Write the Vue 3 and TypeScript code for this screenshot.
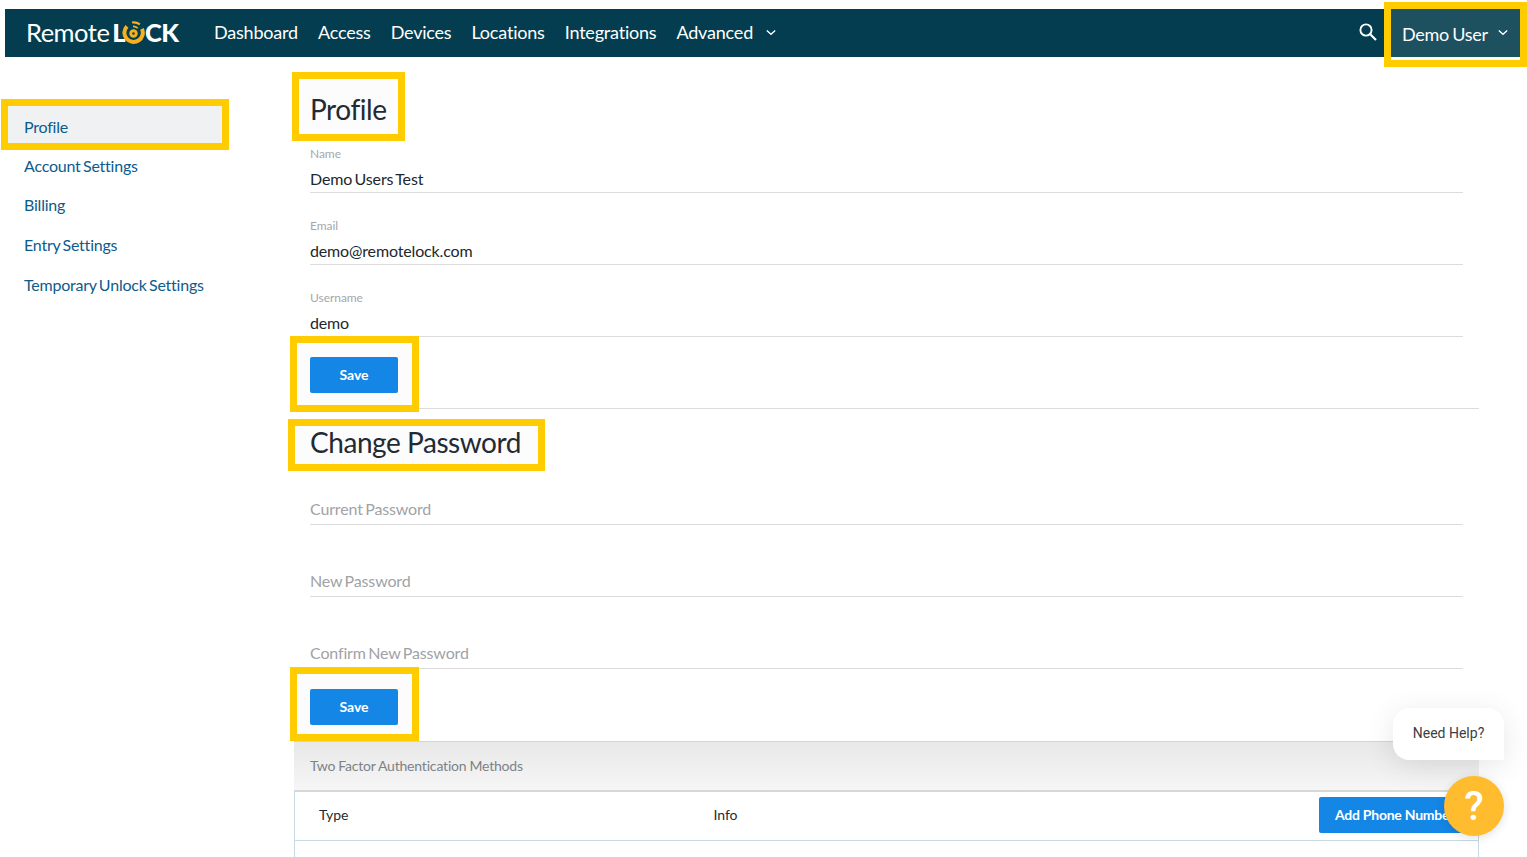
<script setup lang="ts">
const navLinks = ['Dashboard', 'Access', 'Devices', 'Locations', 'Integrations']
const sideLinks = ['Profile', 'Account Settings', 'Billing', 'Entry Settings', 'Temporary Unlock Settings']
const profileFields = [
  { label: 'Name', value: 'Demo Users Test' },
  { label: 'Email', value: 'demo@remotelock.com' },
  { label: 'Username', value: 'demo' }
]
const passwordFields = ['Current Password', 'New Password', 'Confirm New Password']
</script>

<template>
  <div class="page">
    <header class="topbar">
      <div class="logo">
        <span class="logo-light">Remote</span><span class="logo-bold">L</span>
        <svg class="logo-o" viewBox="0 0 24 24" width="23" height="23" aria-hidden="true">
          <path d="M5.2 5.6 A9.6 9.6 0 1 0 20.8 8.2" fill="none" stroke="#f5b01e" stroke-width="4.2" />
          <path d="M10.5 1.6 A10.5 10.5 0 0 1 18.6 3.6" fill="none" stroke="#f5b01e" stroke-width="2.2" />
          <path d="M11.5 5.6 A7 7 0 0 1 16.4 7.4" fill="none" stroke="#f5b01e" stroke-width="1.6" />
          <circle cx="12" cy="13" r="4.4" fill="#f5b01e" />
          <circle cx="12" cy="13" r="1.3" fill="#033d4f" />
        </svg>
        <span class="logo-bold">CK</span>
      </div>
      <nav class="nav">
        <a v-for="link in navLinks" :key="link">{{ link }}</a>
        <a class="has-caret">
          Advanced
          <svg viewBox="0 0 12 8" width="10" height="7" aria-hidden="true"><path d="M1 1.5 6 6.2 11 1.5" fill="none" stroke="#fff" stroke-width="1.6" /></svg>
        </a>
      </nav>
      <svg class="search" viewBox="0 0 20 20" width="20" height="20" aria-hidden="true">
        <circle cx="8" cy="8" r="5.6" fill="none" stroke="#fff" stroke-width="1.9" />
        <path d="M12.2 12.2 18 18" stroke="#fff" stroke-width="2.2" />
      </svg>
      <div class="user marked">
        Demo User
        <svg viewBox="0 0 12 8" width="10" height="7" aria-hidden="true"><path d="M1 1.5 6 6.2 11 1.5" fill="none" stroke="#fff" stroke-width="1.6" /></svg>
      </div>
    </header>

    <div class="body">
      <aside class="side">
        <a v-for="(link, i) in sideLinks" :key="link" class="side-link" :class="{ 'active marked': i === 0 }">{{ link }}</a>
      </aside>

      <main class="main">
        <section class="section">
          <h1 class="title profile-title marked">Profile</h1>
          <div class="fields">
            <div v-for="f in profileFields" :key="f.label" class="field">
              <label>{{ f.label }}</label>
              <div class="value">{{ f.value }}</div>
            </div>
          </div>
          <div class="save-wrap first marked">
            <button type="button" class="btn">Save</button>
          </div>
        </section>

        <section class="section password">
          <h1 class="title password-title marked">Change Password</h1>
          <div class="fields">
            <div v-for="f in passwordFields" :key="f" class="field">
              <label></label>
              <div class="value placeholder">{{ f }}</div>
            </div>
          </div>
          <div class="save-wrap second marked">
            <button type="button" class="btn">Save</button>
          </div>
        </section>

        <div class="panel-head">Two Factor Authentication Methods</div>
        <div class="table">
          <div class="table-row">
            <span class="col-type">Type</span>
            <span class="col-info">Info</span>
            <button type="button" class="btn add">Add Phone Number</button>
          </div>
        </div>
      </main>
    </div>

    <div class="help">
      <div class="help-bubble">Need Help?</div>
      <div class="help-button">?</div>
    </div>
  </div>
</template>

<style scoped>
.page {
  position: relative;
  height: 857px;
  overflow: hidden;
  padding-top: 9px;
  box-sizing: border-box;
  font-family: Lato, "Liberation Sans", sans-serif;
  color: #222b33;
  background: #fff;
}
.marked {
  outline: 7px solid #ffcc00;
  background-color: #fcfcfc;
}
.topbar {
  display: flex;
  align-items: center;
  height: 48px;
  margin: 0 7px 0 5px;
  background: #033d4f;
  color: #fff;
}
.logo {
  display: flex;
  align-items: center;
  margin-left: 22px;
  width: 187px;
  font-size: 25.5px;
  line-height: 1;
}
.logo-light {
  font-weight: 400;
  letter-spacing: -0.5px;
  margin: 0 3px 0 -1px;
}
.logo-bold {
  font-weight: 900;
  letter-spacing: -0.6px;
}
.logo-o {
  margin: -1px 0 0 -3px;
}
.nav {
  display: flex;
  gap: 20px;
  margin-top: -2px;
  font-size: 18px;
  letter-spacing: -0.2px;
}
.nav a {
  white-space: nowrap;
}
.has-caret svg {
  margin-left: 9px;
  vertical-align: 3px;
}
.search {
  margin-left: auto;
  margin-right: 13px;
  margin-top: -2px;
}
.user {
  display: flex;
  align-items: center;
  justify-content: space-between;
  align-self: flex-start;
  box-sizing: border-box;
  width: 129px;
  height: 51px;
  padding: 0 12px 1px 11px;
  font-size: 18px;
  letter-spacing: -0.3px;
  word-spacing: -1px;
  background: linear-gradient(#1d5160 48px, #fcfcfc 48px);
}
.user svg {
  margin-top: -4px;
}
.body {
  display: grid;
  grid-template-columns: 294px 1185px;
}
.side {
  display: flex;
  flex-direction: column;
  padding: 49px 0 0 8px;
}
.side-link {
  box-sizing: border-box;
  width: 214px;
  height: 39.7px;
  line-height: 39.7px;
  padding-left: 16px;
  font-size: 16px;
  letter-spacing: -0.22px;
  word-spacing: -1.5px;
  color: #0d5b8c;
  white-space: nowrap;
}
.side-link.active {
  height: 37px;
  line-height: 41px;
  margin-bottom: 2.8px;
  background-color: #f0f1f3;
}
.section {
  padding-left: 16px;
}
.title {
  margin: 0;
  font-weight: 400;
  font-size: 28px;
  letter-spacing: -0.45px;
  line-height: 1;
  white-space: nowrap;
}
.profile-title {
  box-sizing: border-box;
  width: 99px;
  height: 55px;
  margin: 22px 0 12px -11px;
  padding: 16px 0 0 11px;
}
.field {
  box-sizing: border-box;
  width: 1153px;
  height: 47px;
  margin-bottom: 25px;
  border-bottom: 1px solid #dcdcdc;
}
.field:last-child {
  margin-bottom: 0;
}
.field label {
  display: block;
  height: 15px;
  margin-bottom: 8px;
  font-size: 12px;
  line-height: 15px;
  letter-spacing: -0.05px;
  color: #a4a8ab;
}
.value {
  font-size: 16px;
  line-height: 20px;
  letter-spacing: -0.15px;
  word-spacing: -1.5px;
  color: #20272e;
}
.placeholder {
  margin-top: -2px;
  color: #9fa3a6;
}
.save-wrap {
  box-sizing: border-box;
  width: 115px;
  margin-left: -13px;
  padding-left: 13px;
}
.save-wrap.first {
  height: 62px;
  margin-top: 6px;
  margin-bottom: 3px;
  padding-top: 14px;
}
.save-wrap.second {
  height: 60px;
  margin-top: 5px;
  padding-top: 15px;
}
.btn {
  display: block;
  height: 36px;
  padding: 0 0 2px;
  border: 0;
  border-radius: 2px;
  background: #1486e6;
  color: #fff;
  font-family: inherit;
  font-weight: 700;
  font-size: 14px;
  cursor: pointer;
}
.save-wrap .btn {
  width: 88px;
}
.password {
  border-top: 1px solid #dcdcdc;
}
.password-title {
  box-sizing: border-box;
  width: 243px;
  height: 38px;
  margin: 17px 0 14px -15px;
  padding: 0 0 0 15px;
  line-height: 33px;
}
.panel-head {
  box-sizing: border-box;
  height: 51px;
  margin-top: 7px;
  padding-left: 16px;
  line-height: 48px;
  font-size: 14px;
  letter-spacing: -0.18px;
  word-spacing: -0.5px;
  color: #7d8286;
  border-top: 1px solid #d4d4d4;
  border-bottom: 2px solid #d6d8d8;
  background: linear-gradient(#e8e8e8, #f6f6f6);
}
.table {
  box-sizing: border-box;
  height: 120px;
  border-left: 1px solid #c8dbe2;
  border-right: 1px solid #c8dbe2;
}
.table-row {
  display: flex;
  align-items: center;
  height: 49px;
  box-sizing: border-box;
  padding: 0 0 3px 24px;
  font-size: 14px;
  letter-spacing: -0.05px;
  border-bottom: 1px solid #c8dbe2;
}
.col-type {
  width: 394.5px;
}
.add {
  margin-left: auto;
  padding: 0 0 0 16px;
  width: 159px;
  text-align: left;
  letter-spacing: -0.25px;
  white-space: nowrap;
}
.help {
  position: absolute;
  right: 23px;
  top: 708px;
  display: flex;
  flex-direction: column;
  align-items: flex-end;
}
.help-bubble {
  width: 111px;
  height: 52px;
  line-height: 50px;
  text-align: center;
  font-family: Roboto, "Liberation Sans", sans-serif;
  font-size: 14px;
  color: #3b3f43;
  background: #fff;
  border-radius: 16px 16px 0 16px;
  box-shadow: 0 6px 30px rgba(0, 0, 0, 0.1);
}
.help-button {
  width: 60px;
  height: 60px;
  margin-top: 16px;
  border-radius: 50%;
  background: #febc2e;
  color: #fff;
  text-align: center;
  font-family: Roboto, "Liberation Sans", sans-serif;
  font-weight: 500;
  font-size: 40px;
  line-height: 61px;
  box-shadow: 0 2px 10px rgba(0, 0, 0, 0.12);
}
</style>

<style>
html,
body {
  margin: 0;
  background: #fff;
}
</style>
